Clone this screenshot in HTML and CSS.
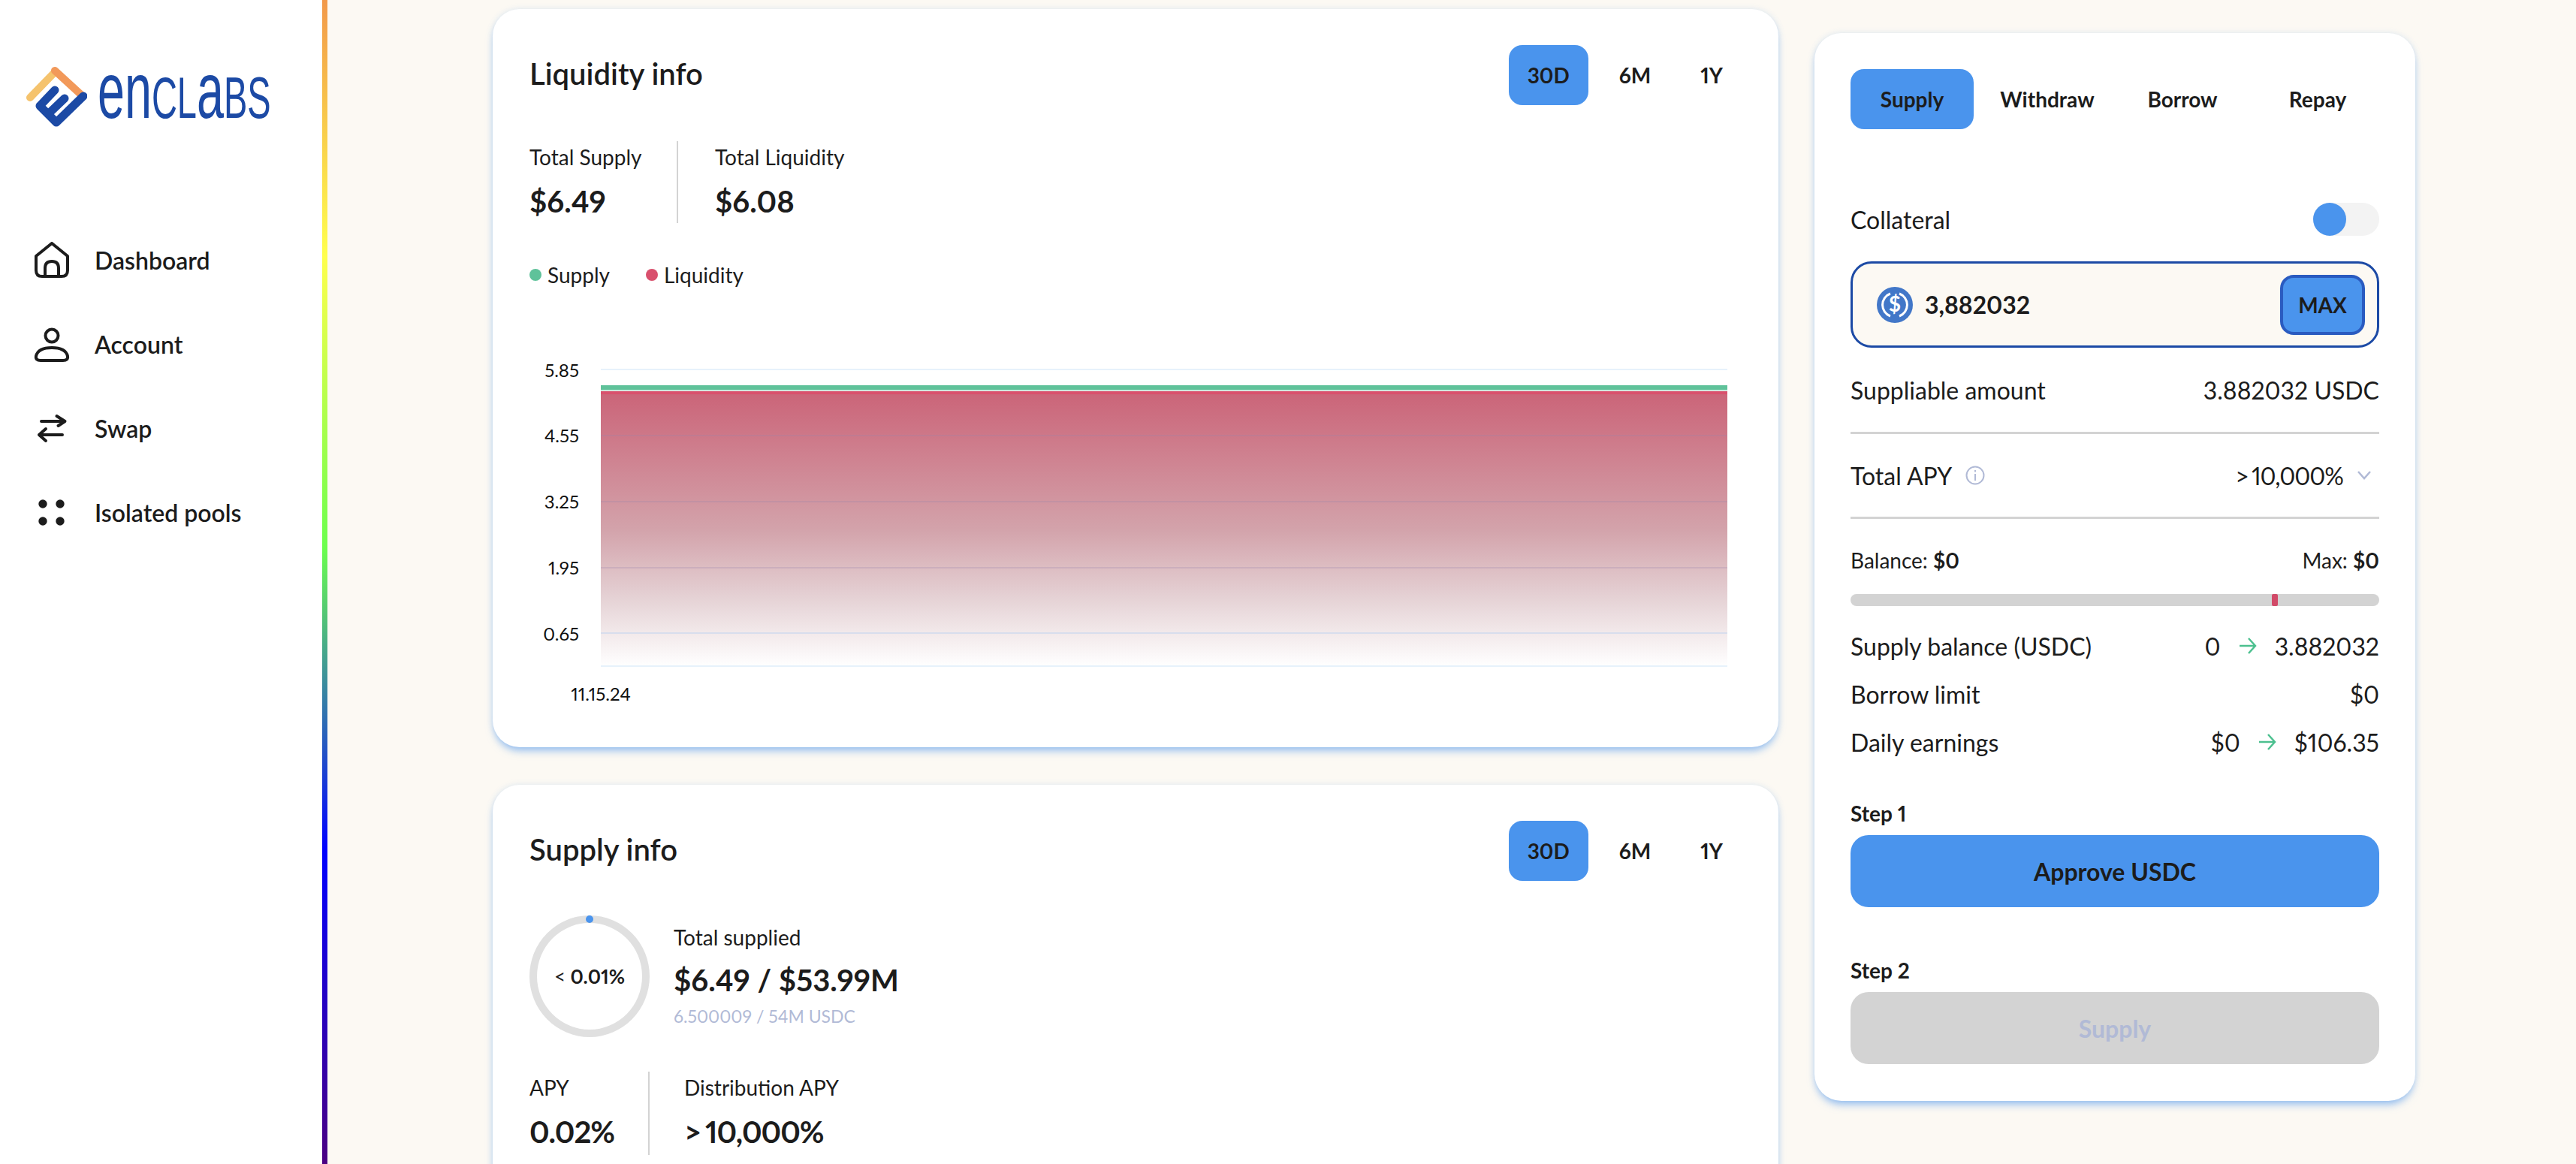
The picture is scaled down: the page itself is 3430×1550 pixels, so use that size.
FILE: index.html
```html
<!DOCTYPE html>
<html lang="en">
<head>
  <meta charset="UTF-8">
  <title>Enclabs - USDC market</title>
  <link rel="stylesheet" href="styles.css">
</head>
<body>
  <div class="app">
    <aside class="sidebar">
      <div class="logo">
        <svg class="logo-mark" viewBox="0 0 82 82" width="82" height="82">
          <path d="M6 42 L39 8" class="logo-yellow"/>
          <path d="M39 6 L75 39" class="logo-orange"/>
          <path d="M19 53 L41 75 L77 40 M19 53 L39 32 M30 64 L52 43" class="logo-blue"/>
        </svg>
        <span class="logo-text">en<span class="logo-cap">CL</span>a<span class="logo-cap">BS</span></span>
      </div>
      <nav class="nav">
        <a class="nav-item">
          <svg class="nav-icon" viewBox="0 0 48 48"><path d="M3 19 L24 2 L45 19 V38 Q45 46 37 46 H11 Q3 46 3 38 Z M15 46 V35 Q15 26 24 26 Q33 26 33 35 V46"/></svg>
          <span>Dashboard</span>
        </a>
        <a class="nav-item">
          <svg class="nav-icon" viewBox="0 0 48 48"><circle cx="24" cy="13" r="8.5"/><path d="M9 46 H39 Q46 46 45 40 Q42 29 24 29 Q6 29 3 40 Q2 46 9 46 Z"/></svg>
          <span>Account</span>
        </a>
        <a class="nav-item">
          <svg class="nav-icon" viewBox="0 0 48 48"><path d="M10 15 H41.5 M30.5 8 L41.5 15 L32.5 21 M38 33 H7 M16 25 L7 33 L16 41"/></svg>
          <span>Swap</span>
        </a>
        <a class="nav-item">
          <svg class="nav-icon" viewBox="0 0 48 48"><circle class="dot" cx="12" cy="13" r="5.7"/><circle class="dot" cx="35" cy="13" r="5.7"/><circle class="dot" cx="12" cy="36" r="5.7"/><circle class="dot" cx="35" cy="36" r="5.7"/></svg>
          <span>Isolated pools</span>
        </a>
      </nav>
    </aside>
    <div class="rainbow"></div>

    <main class="content">
      <div class="charts">
        <section class="card liquidity">
          <div class="card-head">
            <h2>Liquidity info</h2>
            <div class="range">
              <button class="range-btn active">30D</button>
              <button class="range-btn">6M</button>
              <button class="range-btn">1Y</button>
            </div>
          </div>
          <div class="stats stats-liquidity">
            <div class="stat">
              <div class="stat-label">Total Supply</div>
              <div class="stat-value">$6.49</div>
            </div>
            <div class="stat">
              <div class="stat-label">Total Liquidity</div>
              <div class="stat-value">$6.08</div>
            </div>
          </div>
          <div class="legend">
            <span class="legend-item"><i class="legend-dot green"></i>Supply</span>
            <span class="legend-item"><i class="legend-dot red"></i>Liquidity</span>
          </div>
          <svg class="chart" viewBox="0 -14 1614 484" width="1614" height="484">
            <defs>
              <linearGradient id="areaFill" x1="0" y1="0" x2="0" y2="1">
                <stop offset="0" stop-color="#cb6579"/>
                <stop offset="0.5" stop-color="#d3a3ab"/>
                <stop offset="0.75" stop-color="#e5d2d5"/>
                <stop offset="1" stop-color="#ffffff"/>
              </linearGradient>
            </defs>
            <rect x="95" y="36" width="1500" height="362" fill="url(#areaFill)"/>
            <line class="grid" x1="95" x2="1595" y1="3" y2="3"/>
            <line class="grid-over" x1="95" x2="1595" y1="91" y2="91"/>
            <line class="grid-over" x1="95" x2="1595" y1="179" y2="179"/>
            <line class="grid-over" x1="95" x2="1595" y1="267" y2="267"/>
            <line class="grid-low" x1="95" x2="1595" y1="354" y2="354"/>
            <line class="grid" x1="95" x2="1595" y1="398" y2="398"/>
            <rect x="95" y="24" width="1500" height="6" fill="#5fc29a"/>
            <rect x="95" y="30" width="1500" height="2" fill="#cfe9de"/>
            <rect x="95" y="32" width="1500" height="4" fill="#d9506d"/>
            <text class="tick" x="66" y="13" text-anchor="end">5.85</text>
            <text class="tick" x="66" y="100" text-anchor="end">4.55</text>
            <text class="tick" x="66" y="188" text-anchor="end">3.25</text>
            <text class="tick" x="66" y="276" text-anchor="end">1.95</text>
            <text class="tick" x="66" y="364" text-anchor="end">0.65</text>
            <text class="tick" x="95" y="444" text-anchor="middle">11.15.24</text>
          </svg>
        </section>

        <section class="card supply">
          <div class="card-head">
            <h2>Supply info</h2>
            <div class="range">
              <button class="range-btn active">30D</button>
              <button class="range-btn">6M</button>
              <button class="range-btn">1Y</button>
            </div>
          </div>
          <div class="total">
            <div class="donut">
              <span class="donut-dot"></span>
              <span class="donut-label"><span class="lt">&lt;</span> 0.01%</span>
            </div>
            <div class="total-text">
              <div class="stat-label">Total supplied</div>
              <div class="stat-value">$6.49 / $53.99M</div>
              <div class="total-sub">6.500009 / 54M USDC</div>
            </div>
          </div>
          <div class="stats stats-apy">
            <div class="stat">
              <div class="stat-label">APY</div>
              <div class="stat-value">0.02%</div>
            </div>
            <div class="stat">
              <div class="stat-label">Distribution APY</div>
              <div class="stat-value">&gt; 10,000%</div>
            </div>
          </div>
        </section>
      </div>

      <section class="card panel">
        <div class="tabs">
          <button class="tab active">Supply</button>
          <button class="tab">Withdraw</button>
          <button class="tab">Borrow</button>
          <button class="tab">Repay</button>
        </div>
        <div class="row collateral">
          <span>Collateral</span>
          <span class="toggle"><i class="knob"></i></span>
        </div>
        <div class="amount">
          <svg class="usdc" viewBox="0 0 48 48">
            <circle cx="24" cy="24" r="24" fill="#4277c8"/>
            <path d="M18 9 A16 16 0 0 0 18 39 M30 9 A16 16 0 0 1 30 39" fill="none" stroke="#fff" stroke-width="3"/>
            <text x="24" y="33" text-anchor="middle" class="usdc-sign">$</text>
          </svg>
          <span class="amount-value">3,882032</span>
          <button class="max">MAX</button>
        </div>
        <div class="row suppliable">
          <span>Suppliable amount</span>
          <span>3.882032 USDC</span>
        </div>
        <div class="row apy">
          <span class="apy-label">Total APY
            <svg class="info" viewBox="0 0 26 26"><circle cx="13" cy="13" r="11.5"/><path d="M13 11 V20 M13 6 V8.5"/></svg>
          </span>
          <span class="apy-value">&gt; 10,000%
            <svg class="chevron" viewBox="0 0 20 14"><path d="M2 2 L10 11 L18 2"/></svg>
          </span>
        </div>
        <div class="row limits">
          <span>Balance: <b>$0</b></span>
          <span>Max: <b>$0</b></span>
        </div>
        <div class="bar"><i class="bar-mark"></i></div>
        <div class="row detail">
          <span>Supply balance (USDC)</span>
          <span class="change">0
            <svg class="arrow" viewBox="0 0 24 24"><path d="M1 12 H22 M13 2 L22 12 L13 22"/></svg>
            3.882032</span>
        </div>
        <div class="row detail">
          <span>Borrow limit</span>
          <span>$0</span>
        </div>
        <div class="row detail">
          <span>Daily earnings</span>
          <span class="change">$0
            <svg class="arrow" viewBox="0 0 24 24"><path d="M1 12 H22 M13 2 L22 12 L13 22"/></svg>
            $106.35</span>
        </div>
        <div class="step step-one">
          <div class="step-label">Step 1</div>
          <button class="step-btn">Approve USDC</button>
        </div>
        <div class="step step-two">
          <div class="step-label">Step 2</div>
          <button class="step-btn disabled">Supply</button>
        </div>
      </section>
    </main>
  </div>
</body>
</html>
```

FILE: styles.css
```css
* {
  box-sizing: border-box;
}
html,
body {
  margin: 0;
  height: 1550px;
  overflow: hidden;
}
body {
  font-family: Lato, "Noto Sans", sans-serif;
  font-size: 32px;
  font-variant-numeric: proportional-nums;
  color: #1c1c1c;
  background-color: #fcf9f3;
}
button {
  font-family: inherit;
  font-variant-numeric: inherit;
  color: inherit;
  border: 0;
  background: none;
  padding: 0;
}
.app {
  display: flex;
  height: 1550px;
}

/* sidebar */
.sidebar {
  width: 429px;
  flex: none;
  background-color: #fff;
  padding: 88px 0 0 34px;
}
.logo {
  display: flex;
  gap: 14px;
  height: 82px;
}
.logo-mark {
  flex: none;
}
.logo-mark path {
  fill: none;
  stroke-linecap: round;
  stroke-linejoin: round;
}
.logo-yellow {
  stroke: #f5c36d;
  stroke-width: 10;
}
.logo-orange {
  stroke: #f2995a;
  stroke-width: 10;
}
.logo-blue {
  stroke: #1c4aa5;
  stroke-width: 11;
}
.logo-text {
  display: block;
  width: 230px;
  font-family: "Liberation Sans", sans-serif;
  font-size: 106px;
  line-height: 82px;
  white-space: nowrap;
  color: #1c4aa5;
  transform: translateY(-9px) scaleX(0.61);
  transform-origin: left center;
}
.logo-cap {
  font-size: 77px;
}
.nav {
  margin-top: 152px;
  display: flex;
  flex-direction: column;
  gap: 64px;
  padding-left: 11px;
}
.nav-item {
  display: flex;
  align-items: center;
  gap: 33px;
  height: 48px;
  font-weight: 600;
  font-size: 32px;
}
.nav-icon {
  width: 48px;
  height: 48px;
  flex: none;
  fill: none;
  stroke: #1c1c1c;
  stroke-width: 4;
  stroke-linecap: round;
  stroke-linejoin: round;
}
.nav-icon .dot {
  fill: #1c1c1c;
  stroke: none;
}
.rainbow {
  width: 7px;
  flex: none;
  background: linear-gradient(180deg, #f2994a 0%, #ffff4d 22%, #6bff4d 47%, #0000ff 73%, #4b0082 100%);
}

/* main */
.content {
  flex: 1;
  display: flex;
  align-items: flex-start;
  gap: 48px;
  padding-left: 220px;
}
.charts {
  width: 1712px;
  padding-top: 12px;
  display: flex;
  flex-direction: column;
  gap: 50px;
}
.card {
  background-color: #fff;
  border-radius: 36px;
  box-shadow: 0 7px 12px -3px rgba(74, 147, 237, 0.6), 0 0 8px rgba(74, 147, 237, 0.15);
}
.liquidity {
  height: 983px;
  padding: 48px 49px 0;
}
.supply {
  height: 700px;
  padding: 48px 49px 0;
}
.card-head {
  display: flex;
  align-items: center;
  justify-content: space-between;
  height: 80px;
}
h2 {
  margin: 0;
  padding-bottom: 4px;
  font-size: 40px;
  font-weight: 600;
}
.range {
  display: flex;
  gap: 16px;
}
.range-btn {
  height: 80px;
  padding: 0 25px;
  border-radius: 18px;
  font-size: 28px;
  font-weight: 700;
}
.active {
  background-color: #4a94ed;
}

/* stats */
.stats {
  display: flex;
}
.stat-label {
  font-size: 28px;
  line-height: 36px;
}
.stat-value {
  font-size: 40px;
  font-weight: 700;
  line-height: 50px;
  margin-top: 16px;
}
.stat:first-child {
  border-right: 2px solid #d3d3d3;
}
.stats-liquidity {
  margin-top: 48px;
}
.stats-liquidity .stat {
  height: 109px;
  padding-top: 3px;
}
.stats-liquidity .stat:first-child {
  width: 198px;
}
.stats-liquidity .stat:last-child {
  padding-left: 49px;
}
.stats-apy {
  margin-top: 46px;
}
.stats-apy .stat {
  height: 111px;
  padding-top: 3px;
}
.stats-apy .stat:first-child {
  width: 160px;
}
.stats-apy .stat:last-child {
  padding-left: 46px;
}
.stats-apy .stat-value {
  letter-spacing: -1px;
  word-spacing: -3px;
}
.legend {
  display: flex;
  gap: 48px;
  margin-top: 51px;
  height: 36px;
  align-items: center;
  font-size: 28px;
}
.legend-item {
  display: flex;
  align-items: center;
  gap: 8px;
}
.legend-dot {
  width: 16px;
  height: 16px;
  border-radius: 50%;
}
.green {
  background-color: #5fc29a;
}
.red {
  background-color: #d9506d;
}
.chart {
  display: block;
  margin-top: 91px;
}
.grid {
  stroke: #e7f2fb;
  stroke-width: 2;
}
.grid-over {
  stroke: rgba(150, 130, 170, 0.25);
  stroke-width: 2;
}
.grid-low {
  stroke: rgba(190, 210, 240, 0.5);
  stroke-width: 2;
}
.tick {
  font-size: 24px;
  fill: #111;
}

/* supply info */
.total {
  display: flex;
  align-items: center;
  gap: 32px;
  margin-top: 46px;
}
.donut {
  position: relative;
  width: 160px;
  height: 162px;
  border: 10px solid #e0e0e0;
  border-radius: 50%;
  display: flex;
  align-items: center;
  justify-content: center;
  flex: none;
}
.donut-dot {
  position: absolute;
  top: -10px;
  left: 50%;
  margin-left: -5px;
  width: 10px;
  height: 10px;
  border-radius: 50%;
  background-color: #4a94ed;
}
.donut-label {
  font-size: 26px;
  font-weight: 700;
}
.lt {
  font-weight: 400;
}
.total-text .stat-label {
  margin-top: -2px;
}
.total-text .stat-value {
  margin-top: 14px;
}
.total-sub {
  font-size: 23px;
  line-height: 30px;
  margin-top: 8px;
  color: #b1bad6;
}

/* right panel */
.panel {
  width: 800px;
  height: 1422px;
  margin-top: 44px;
  padding: 48px;
  flex: none;
}
.tabs {
  display: grid;
  grid-template-columns: repeat(4, 1fr);
  gap: 16px;
}
.tab {
  height: 80px;
  border-radius: 18px;
  font-size: 28px;
  font-weight: 700;
}
.row {
  display: flex;
  align-items: center;
  justify-content: space-between;
}
.collateral {
  margin-top: 98px;
  height: 44px;
}
.toggle {
  display: block;
  width: 88px;
  height: 44px;
  border-radius: 22px;
  background-color: #f3f3f3;
}
.knob {
  display: block;
  width: 44px;
  height: 44px;
  border-radius: 50%;
  background-color: #4a94ed;
}
.amount {
  display: flex;
  align-items: center;
  height: 115px;
  margin-top: 34px;
  padding: 0 16px 0 32px;
  border: 3px solid #1c4aa5;
  border-radius: 28px;
  background-color: #fcf9f3;
}
.usdc {
  width: 48px;
  height: 48px;
  flex: none;
}
.usdc-sign {
  font-size: 28px;
  font-weight: 700;
  fill: #fff;
}
.amount-value {
  margin-left: 16px;
  flex: 1;
  font-weight: 700;
}
.max {
  width: 113px;
  height: 80px;
  border: 4px solid #2a5bc0;
  border-radius: 18px;
  background-color: #4a94ed;
  font-size: 28px;
  font-weight: 700;
}
.suppliable {
  height: 115px;
  border-bottom: 3px solid #d3d3d3;
}
.apy {
  height: 113px;
  border-bottom: 3px solid #d3d3d3;
}
.apy-label,
.apy-value,
.change {
  display: flex;
  align-items: center;
}
.apy-label {
  gap: 18px;
}
.apy-value {
  gap: 18px;
  padding-right: 10px;
  letter-spacing: -1px;
  word-spacing: -3px;
}
.info {
  width: 26px;
  height: 26px;
  fill: none;
  stroke: #b1bad6;
  stroke-width: 2;
}
.chevron {
  width: 20px;
  height: 14px;
  fill: none;
  stroke: #b1bad6;
  stroke-width: 2.5;
}
.limits {
  margin-top: 38px;
  font-size: 28px;
  height: 34px;
}
.limits b {
  font-weight: 700;
}
.bar {
  position: relative;
  height: 16px;
  margin-top: 28px;
  border-radius: 8px;
  background-color: #d3d3d3;
}
.bar-mark {
  position: absolute;
  left: 561px;
  top: 0;
  width: 8px;
  height: 16px;
  border-radius: 2px;
  background-color: #d14a68;
}
.detail {
  height: 64px;
}
.bar + .detail {
  margin-top: 21px;
}
.change {
  gap: 24px;
}
.arrow {
  width: 24px;
  height: 24px;
  fill: none;
  stroke: #4cc08f;
  stroke-width: 2.5;
}
.step-label {
  font-size: 28px;
  font-weight: 700;
  line-height: 32px;
}
.step-btn {
  display: block;
  width: 100%;
  height: 96px;
  margin-top: 13px;
  border-radius: 24px;
  background-color: #4a94ed;
  font-size: 32px;
  font-weight: 700;
}
.step-btn.disabled {
  background-color: #d3d3d3;
  color: #b1bad6;
}
.step-one {
  margin-top: 47px;
}
.step-two {
  margin-top: 68px;
}
```
